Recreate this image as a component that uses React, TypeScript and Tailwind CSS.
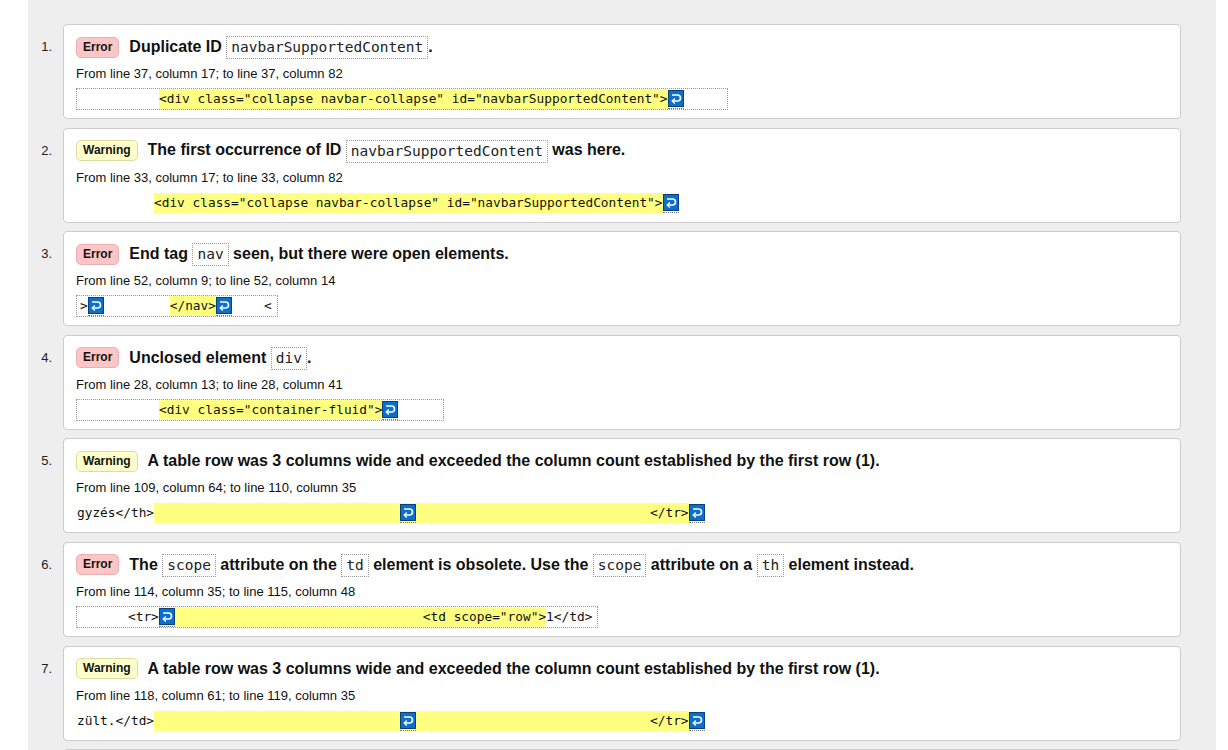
import React from "react";

const SANS = { fontFamily: '"Liberation Sans", Arial, sans-serif' };

function Lf() {
  return (
    <span className="inline-block align-top h-[20px] pt-[1px] border-b border-dotted border-[#777] leading-none">
      <svg width="16" height="17" viewBox="0 0 16 17" className="block">
        <rect x="0.5" y="0.5" width="15" height="16" fill="#0b6fd2" stroke="#0a3f7a" strokeWidth="1" />
        <path d="M4 5 H9.5 A3 3 0 0 1 9.5 11 H5" stroke="#fff" strokeWidth="1.6" fill="none" />
        <path d="M6.8 8.6 L4.3 11 L6.8 13.4" stroke="#fff" strokeWidth="1.4" fill="none" />
      </svg>
    </span>
  );
}

function Code({ children }: { children: React.ReactNode }) {
  return (
    <code className="inline-block px-[4px] h-[23px] leading-[21px] border border-dotted border-[#999] bg-white font-['DejaVu_Sans_Mono',monospace] text-[14.5px] font-normal text-[#222] align-middle">
      {children}
    </code>
  );
}

function Badge({ kind }: { kind: "Error" | "Warning" }) {
  const cls =
    kind === "Error"
      ? "bg-[#fcc6c6] border-[#e8b0b0]"
      : "bg-[#ffffcc] border-[#dcdca0]";
  return (
    <span
      className={`inline-block shrink-0 h-[21px] leading-[19px] px-[6px] rounded-[5px] border text-[12px] font-bold text-[#111] mr-[10px] ${cls}`}
    >
      {kind}
    </span>
  );
}

function Sp({ w }: { w: string }) {
  return <span className={`inline-block ${w}`} />;
}

function Mark({ children }: { children: React.ReactNode }) {
  return <span className="bg-[#ffff80] inline-block h-[20px]">{children}</span>;
}

function Extract({
  boxed,
  width,
  children,
}: {
  boxed: boolean;
  width?: string;
  children: React.ReactNode;
}) {
  return (
    <div
      className={`mt-[6px] h-[22px] flex items-center whitespace-pre font-['DejaVu_Sans_Mono',monospace] text-[12.8px] leading-[20px] text-[#111] ${
        boxed ? "border border-dotted border-[#999] " + (width ?? "") : "border border-transparent"
      }`}
    >
      {children}
    </div>
  );
}

function Item({
  n,
  kind,
  title,
  loc,
  extract,
}: {
  n: number;
  kind: "Error" | "Warning";
  title: React.ReactNode;
  loc: string;
  extract: React.ReactNode;
}) {
  return (
    <div className="flex shrink-0">
      <div className="w-[35px] pr-[11px] pt-[11px] text-right text-[13px] leading-[24px] text-[#222]">{n}.</div>
      <div className="w-[1118px] h-[95px] bg-white border border-[#cccccc] rounded-[4px] pl-[12px] pt-[10px] overflow-hidden">
        <div className="flex items-center h-[24px]">
          <Badge kind={kind} />
          <div className="text-[16px] font-bold text-[#111] whitespace-nowrap leading-[24px]">{title}</div>
        </div>
        <div className="mt-[7px] text-[13px] leading-[16px] text-[#111]">{loc}</div>
        {extract}
      </div>
    </div>
  );
}

export default function App() {
  return (
    <div className="w-[1228px] h-[750px] bg-white flex overflow-hidden" style={SANS}>
      <div className="w-[28px] shrink-0" />
      <div className="w-[1188px] h-[750px] bg-[#eeeeee] pt-[24px] flex flex-col gap-[8.6px] overflow-hidden">
        <Item
          n={1}
          kind="Error"
          title={
            <>
              Duplicate ID <Code>navbarSupportedContent</Code>.
            </>
          }
          loc="From line 37, column 17; to line 37, column 82"
          extract={
            <Extract boxed width="w-[652px]">
              <Sp w="w-[82px]" />
              <Mark>{'<div class="collapse navbar-collapse" id="navbarSupportedContent">'}</Mark>
              <Lf />
            </Extract>
          }
        />
        <Item
          n={2}
          kind="Warning"
          title={
            <>
              The first occurrence of ID <Code>navbarSupportedContent</Code> was here.
            </>
          }
          loc="From line 33, column 17; to line 33, column 82"
          extract={
            <Extract boxed={false}>
              <Sp w="w-[77px]" />
              <Mark>{'<div class="collapse navbar-collapse" id="navbarSupportedContent">'}</Mark>
              <Lf />
            </Extract>
          }
        />
        <Item
          n={3}
          kind="Error"
          title={
            <>
              End tag <Code>nav</Code> seen, but there were open elements.
            </>
          }
          loc="From line 52, column 9; to line 52, column 14"
          extract={
            <Extract boxed width="w-[202px]">
              <Sp w="w-[3px]" />
              {">"}
              <Lf />
              <Sp w="w-[66px]" />
              <Mark>{"</nav>"}</Mark>
              <Lf />
              <Sp w="w-[32px]" />
              {"<"}
            </Extract>
          }
        />
        <Item
          n={4}
          kind="Error"
          title={
            <>
              Unclosed element <Code>div</Code>.
            </>
          }
          loc="From line 28, column 13; to line 28, column 41"
          extract={
            <Extract boxed width="w-[368px]">
              <Sp w="w-[82px]" />
              <Mark>{'<div class="container-fluid">'}</Mark>
              <Lf />
            </Extract>
          }
        />
        <Item
          n={5}
          kind="Warning"
          title={<>A table row was 3 columns wide and exceeded the column count established by the first row (1).</>}
          loc="From line 109, column 64; to line 110, column 35"
          extract={
            <Extract boxed={false}>
              {"gyzés</th>"}
              <Mark>
                <Sp w="w-[246px]" />
                <Lf />
                <Sp w="w-[234px]" />
                {"</tr>"}
              </Mark>
              <Lf />
            </Extract>
          }
        />
        <Item
          n={6}
          kind="Error"
          title={
            <>
              The <Code>scope</Code> attribute on the <Code>td</Code> element is obsolete. Use the <Code>scope</Code> attribute on a <Code>th</Code> element instead.
            </>
          }
          loc="From line 114, column 35; to line 115, column 48"
          extract={
            <Extract boxed width="w-[522px]">
              <Sp w="w-[51px]" />
              {"<tr>"}
              <Mark>
                <Lf />
                <Sp w="w-[248px]" />
                {'<td scope="row">'}
              </Mark>
              {"1</td>"}
            </Extract>
          }
        />
        <Item
          n={7}
          kind="Warning"
          title={<>A table row was 3 columns wide and exceeded the column count established by the first row (1).</>}
          loc="From line 118, column 61; to line 119, column 35"
          extract={
            <Extract boxed={false}>
              {"zült.</td>"}
              <Mark>
                <Sp w="w-[246px]" />
                <Lf />
                <Sp w="w-[234px]" />
                {"</tr>"}
              </Mark>
              <Lf />
            </Extract>
          }
        />
        <div className="flex shrink-0">
          <div className="w-[35px]" />
          <div className="w-[1118px] h-[95px] bg-white border border-[#cccccc] rounded-[4px]" />
        </div>
      </div>
      <div className="w-[12px] shrink-0 bg-white" />
    </div>
  );
}
